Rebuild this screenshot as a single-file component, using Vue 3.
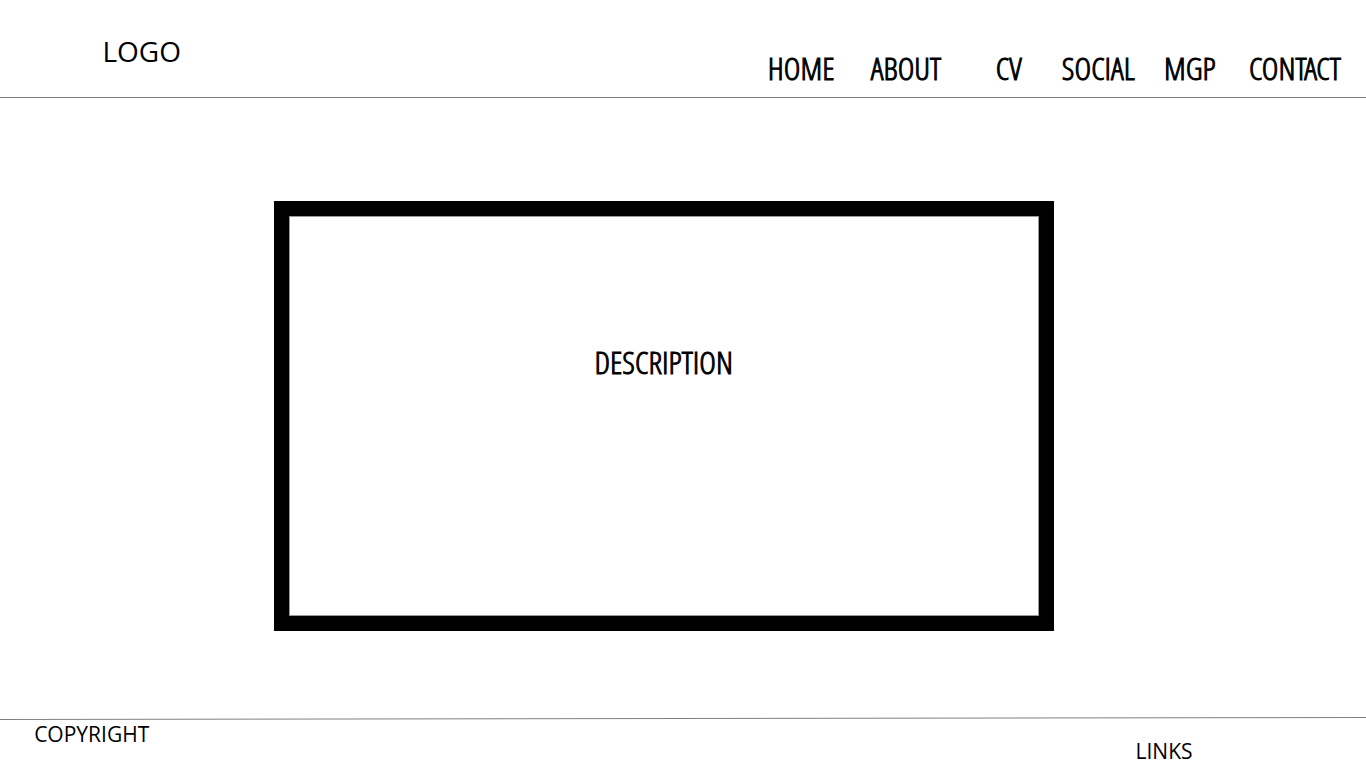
<script setup>
const links = ['HOME', 'ABOUT', 'CV', 'SOCIAL', 'MGP', 'CONTACT']
</script>

<template>
  <div class="page">
    <header class="header">
      <a class="logo" href="#">LOGO</a>
      <nav class="nav" aria-label="Main">
        <a v-for="link in links" :key="link" :href="'#' + link.toLowerCase()">{{ link }}</a>
      </nav>
    </header>
    <main class="main">
      <section class="panel">
        <h1>DESCRIPTION</h1>
      </section>
    </main>
    <svg class="rule" viewBox="0 0 1366 4" preserveAspectRatio="none" aria-hidden="true">
      <path d="M0 2.5L1366 0.5" stroke="#808080" stroke-width="1" />
    </svg>
    <footer class="footer">
      <span>COPYRIGHT</span>
      <a class="links" href="#links">LINKS</a>
    </footer>
  </div>
</template>

<style>
body {
  background: #fff;
}
</style>

<style scoped>
.page {
  min-height: 100vh;
  display: flex;
  flex-direction: column;
  font-family: "Open Sans", "Noto Sans", sans-serif;
  color: #000;
}
a {
  color: inherit;
  text-decoration: none;
}
.header {
  display: flex;
  justify-content: space-between;
  height: 97px;
  border-bottom: 1px solid #808080;
}
.logo {
  margin-left: 7.5%;
  padding-top: 31px;
  font-size: 28px;
  line-height: 40px;
}
.nav,
.panel h1 {
  font-family: "Open Sans Condensed Light", "Open Sans Condensed", sans-serif;
  font-size: 32px;
  line-height: 40px;
  font-weight: 400;
  -webkit-text-stroke: 1px #000;
}
.nav {
  width: 43.8%;
  display: grid;
  grid-template-columns: 103fr 125fr 66fr 102fr 85fr 117fr;
  padding-top: 48px;
}
.main {
  flex: 1;
  padding: 103px 0 86px 20.05%;
  display: flex;
}
.panel {
  width: 71.4%;
  min-height: 400px;
  box-sizing: border-box;
  border: 15px solid #000;
  box-shadow: inset 0 0 0 1px #999;
  text-align: center;
}
.panel h1 {
  margin: 0;
  padding-top: 126px;
}
.rule {
  display: block;
  width: 100%;
  height: 4px;
}
.footer {
  display: flex;
  justify-content: space-between;
  height: 47px;
  padding: 0 12.7% 0 2.5%;
  font-size: 21px;
  line-height: 26px;
}
.links {
  padding-top: 17px;
}
</style>
